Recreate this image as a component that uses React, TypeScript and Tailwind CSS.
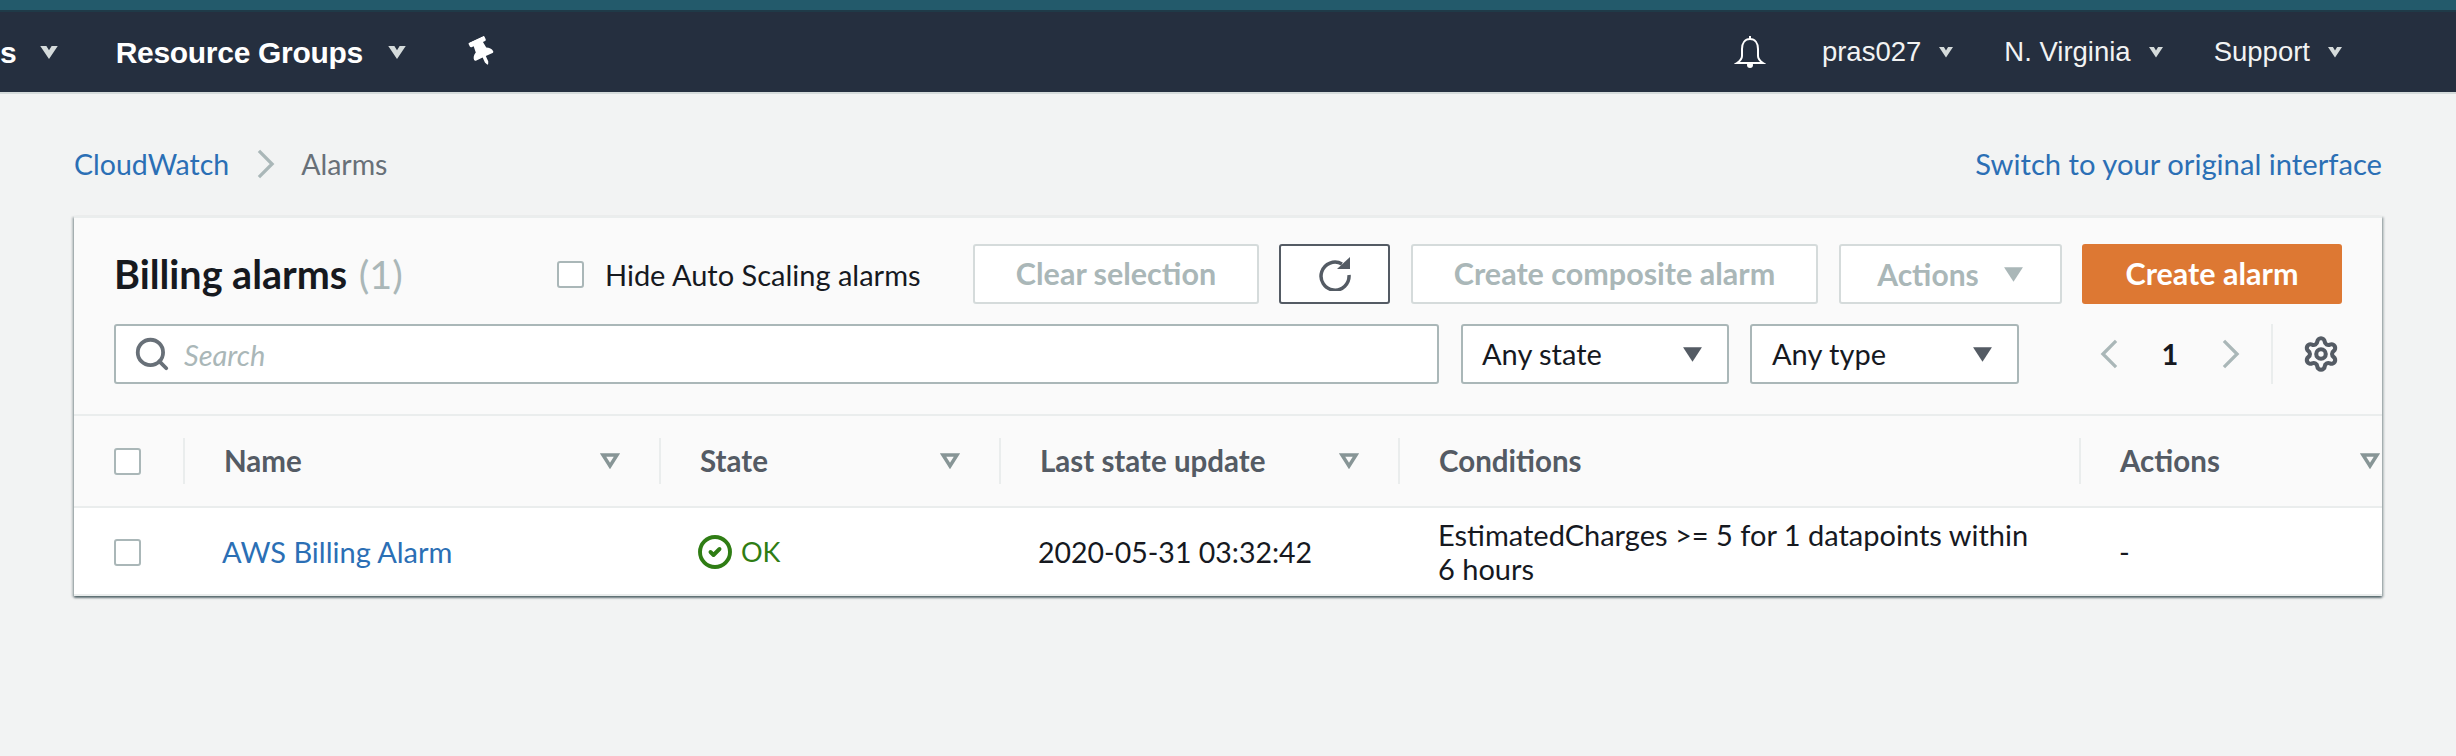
import React from 'react';
import { Search, Settings, CircleCheck } from 'lucide-react';
import { FaThumbtack } from 'react-icons/fa';

const Caret = ({ className = '' }: { className?: string }) => (
  <svg viewBox="0 0 20 16" className={className} fill="currentColor">
    <path d="M1 1h18L10 15z" />
  </svg>
);

// nav carets have a small notch on top
const NavCaret = ({ className = '' }: { className?: string }) => (
  <svg viewBox="0 0 20 16" className={className} fill="currentColor">
    <path d="M0 1h7l3 5 3-5h7L10 16z" />
  </svg>
);

const SortIcon = () => (
  <svg viewBox="0 0 20 16" className="w-[20px] h-[16px] text-[#879596]" fill="none" stroke="currentColor" strokeWidth="3.5">
    <path d="M3 2h14L10 13z" />
  </svg>
);

const Chevron = ({ flip = false }: { flip?: boolean }) => (
  <svg viewBox="0 0 20 32" className="w-[19px] h-[30px] text-[#aab7b8]" fill="none" stroke="currentColor" strokeWidth="3.5">
    <path d={flip ? 'M3 2l14 14L3 30' : 'M17 2L3 16l14 14'} />
  </svg>
);

const Checkbox = () => (
  <div className="w-[27px] h-[27px] rounded-[3px] border-2 border-[#aab7b8] bg-white" />
);

const NavItem = ({ label, bold = false }: { label: string; bold?: boolean }) => (
  <span className={bold ? 'text-[30px] font-bold text-white tracking-[-0.3px]' : 'text-[27.5px] text-[#f2f3f3]'}>{label}</span>
);

const DisabledButton = ({ label, width }: { label: string; width: string }) => (
  <button className={`h-[60px] ${width} rounded-[3px] border-2 border-[#d5dbdb] bg-white text-[30.5px] font-bold text-[#aab7b8]`}>
    {label}
  </button>
);

const HeaderCell = ({ label, width, sort = true }: { label: string; width: string; sort?: boolean }) => (
  <div className={`${width} h-[46px] flex items-center justify-between pl-[39px] pr-[39px] border-l-2 border-[#eaeded]`}>
    <span className="text-[29.5px] font-bold text-[#545b64]">{label}</span>
    {sort && <SortIcon />}
  </div>
);

export default function App() {
  return (
    <div className="w-[2456px] h-[756px] overflow-hidden bg-[#f2f3f3] font-['Lato',sans-serif] text-[#16191f]">
      {/* Top bars */}
      <div className="h-[10px] bg-[#235a6b]" />
      <div className="h-[2px] bg-[#1f3a48]" />
      <div className="h-[80px] bg-[#252f3f] flex items-center font-['Liberation_Sans',sans-serif]">
        <span className="text-[30px] font-bold text-white">s</span>
        <NavCaret className="w-[18px] h-[14px] ml-[23px] text-[#d5dbdb]" />
        <div className="ml-[58px]">
          <NavItem label="Resource Groups" bold />
        </div>
        <NavCaret className="w-[18px] h-[14px] ml-[25px] text-[#d5dbdb]" />
        <FaThumbtack className="ml-[64px] w-[24px] h-[28px] text-white -rotate-[25deg]" />
        <svg viewBox="0 0 32 34" className="ml-auto w-[32px] h-[34px] text-white" fill="none" stroke="currentColor" strokeWidth="2">
          <path d="M16 1v3M16 4c-5 0-8 4-8 10v7c0 3-2 5-5 7h26c-3-2-5-4-5-7v-7c0-6-3-10-8-10z" />
          <circle cx="16" cy="30" r="3" fill="currentColor" stroke="none" />
        </svg>
        <div className="ml-[56px]">
          <NavItem label="pras027" />
        </div>
        <NavCaret className="w-[14px] h-[12px] ml-[18px] text-[#d5dbdb]" />
        <div className="ml-[51px]">
          <NavItem label="N. Virginia" />
        </div>
        <NavCaret className="w-[14px] h-[12px] ml-[18px] text-[#d5dbdb]" />
        <div className="ml-[51px]">
          <NavItem label="Support" />
        </div>
        <NavCaret className="w-[14px] h-[12px] ml-[18px] mr-[114px] text-[#d5dbdb]" />
      </div>
      <div className="h-[2px] bg-[#d5dbdb]" />

      {/* Breadcrumb */}
      <div className="h-[122px] pt-[50px] px-[74px]">
        <div className="h-[40px] flex items-center text-[28.5px]">
          <a className="text-[#2b6fb5]">CloudWatch</a>
          <svg viewBox="0 0 20 32" className="w-[19px] h-[30px] ml-[27px] text-[#aab7b8]" fill="none" stroke="currentColor" strokeWidth="3.5">
            <path d="M3 2l14 14L3 30" />
          </svg>
          <span className="ml-[26px] text-[#687078]">Alarms</span>
          <a className="ml-auto text-[29.2px] text-[#2b6fb5]">Switch to your original interface</a>
        </div>
      </div>

      {/* Alarms card */}
      <div className="mx-[74px] w-[2308px] bg-[#fafafa] border-t-2 border-[#eaeded] shadow-[0_2px_2px_0_rgba(0,28,36,0.5),2px_1px_2px_0_rgba(0,28,36,0.2),-2px_1px_2px_0_rgba(0,28,36,0.2)]">
        <div className="px-[40px] pt-[26px] pb-[30px] border-b-2 border-[#eaeded]">
          <div className="h-[60px] flex items-center">
            <h1 className="w-[443px] text-[39.5px] font-bold whitespace-nowrap">
              Billing alarms <span className="ml-[2px] font-normal text-[#aab7b8]">(1)</span>
            </h1>
            <Checkbox />
            <span className="ml-[21px] pt-[2px] text-[29px]">Hide Auto Scaling alarms</span>
            <div className="ml-auto flex items-center">
              <DisabledButton label="Clear selection" width="w-[286px]" />
              <button className="ml-[20px] h-[60px] w-[111px] rounded-[3px] border-2 border-[#545b64] bg-white flex items-center justify-center">
                <svg viewBox="0 0 34 34" className="w-[34px] h-[34px] text-[#545b64]" fill="none" stroke="currentColor" strokeWidth="3.5">
                  <path d="M24 7a14 14 0 1 0 7 11" />
                  <path d="M19 12h13V0z" fill="currentColor" stroke="none" />
                </svg>
              </button>
              <DisabledButton label="Create composite alarm" width="ml-[21px] w-[407px]" />
              <button className="ml-[21px] h-[60px] w-[223px] rounded-[3px] border-2 border-[#d5dbdb] bg-white text-[30px] font-bold text-[#aab7b8] flex items-center justify-center">
                Actions
                <Caret className="w-[21px] h-[17px] ml-[24px] text-[#aab7b8]" />
              </button>
              <button className="ml-[20px] h-[60px] w-[260px] rounded-[3px] bg-[#dd7833] text-[30.5px] font-bold text-white">
                Create alarm
              </button>
            </div>
          </div>

          <div className="mt-[20px] h-[60px] flex items-center">
            <div className="flex-1 h-[60px] rounded-[3px] border-2 border-[#aab7b8] bg-white flex items-center pl-[17px]">
              <Search className="w-[38px] h-[38px] text-[#687078]" strokeWidth={2.4} />
              <span className="ml-[13px] pt-[2px] text-[29px] italic text-[#aab7b8]">Search</span>
            </div>
            <div className="ml-[22px] w-[268px] h-[60px] rounded-[3px] border-2 border-[#aab7b8] bg-white flex items-center justify-between pl-[19px] pr-[24px] text-[29px]">
              Any state
              <Caret className="w-[21px] h-[17px] text-[#545b64]" />
            </div>
            <div className="ml-[21px] w-[269px] h-[60px] rounded-[3px] border-2 border-[#aab7b8] bg-white flex items-center justify-between pl-[20px] pr-[24px] text-[29px]">
              Any type
              <Caret className="w-[21px] h-[17px] text-[#545b64]" />
            </div>
            <div className="w-[323px] flex items-center pl-[81px]">
              <Chevron />
              <span className="w-[102px] text-center text-[29px] font-bold">1</span>
              <Chevron flip />
              <div className="ml-[31px] w-[2px] h-[60px] bg-[#eaeded]" />
              <Settings className="ml-[29px] w-[38px] h-[38px] text-[#545b64]" strokeWidth={2.6} />
            </div>
          </div>
        </div>

        {/* Table header */}
        <div className="h-[92px] flex items-center border-b-2 border-[#eaeded]">
          <div className="w-[109px] flex items-center pl-[40px]">
            <Checkbox />
          </div>
          <HeaderCell label="Name" width="w-[476px]" />
          <HeaderCell label="State" width="w-[340px]" />
          <HeaderCell label="Last state update" width="w-[399px]" />
          <HeaderCell label="Conditions" width="w-[681px]" sort={false} />
          <div className="w-[303px] h-[46px] flex items-center justify-between pl-[39px] pr-[2px] border-l-2 border-[#eaeded]">
            <span className="text-[29.5px] font-bold text-[#545b64]">Actions</span>
            <SortIcon />
          </div>
        </div>

        {/* Table row */}
        <div className="h-[88px] flex items-center bg-white border-b-2 border-[#eaeded] text-[29px] pt-[2px]">
          <div className="w-[110px] flex items-center pl-[40px]">
            <Checkbox />
          </div>
          <div className="w-[475px] pl-[38px] text-[#2b6fb5]">AWS Billing Alarm</div>
          <div className="w-[340px] pl-[38px] flex items-center text-[#2f7d14]">
            <CircleCheck className="w-[36px] h-[36px]" strokeWidth={2.6} />
            <span className="ml-[8px] text-[27px]">OK</span>
          </div>
          <div className="w-[399px] pl-[39px] text-[28.5px]">2020-05-31 03:32:42</div>
          <div className="w-[681px] pl-[40px] pr-[40px] leading-[34px]">
            EstimatedCharges &gt;= 5 for 1 datapoints within 6 hours
          </div>
          <div className="w-[303px] pl-[40px]">-</div>
        </div>
      </div>
    </div>
  );
}
